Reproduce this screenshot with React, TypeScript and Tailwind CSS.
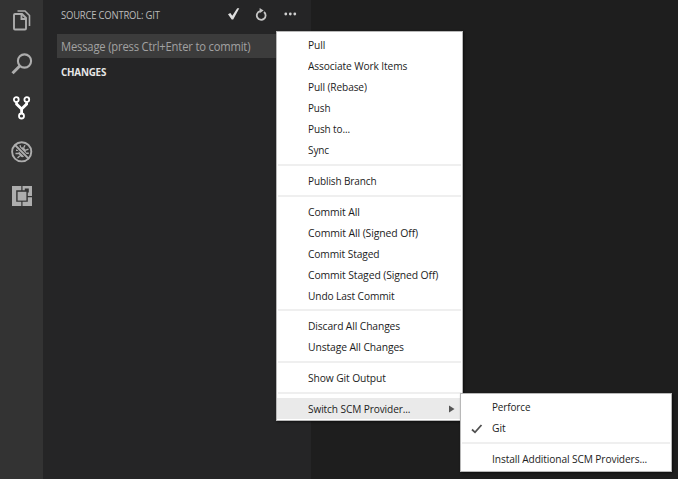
import type { ReactNode } from "react";

type ItemProps = { label: string; fit: string; active?: boolean; checked?: boolean; sub?: boolean };

function Item({ label, fit, active, checked, sub }: ItemProps) {
  return (
    <div className={`flex h-[21px] shrink-0 items-center whitespace-nowrap ${active ? "bg-[#eaeaea]" : ""}`}>
      <span className="flex w-[31px] shrink-0 items-center pl-[10px]">
        {checked && (
          <svg width="12" height="10" viewBox="0 0 12 10" fill="none" stroke="#505050" strokeWidth="1.8">
            <path d="M1 5.5 4 8.3 10.5 1" />
          </svg>
        )}
      </span>
      <span className={`origin-left tracking-[-0.12px] text-[#1c1c1c] ${active ? "mt-[1px]" : "-mt-[1px]"} ${fit}`}>{label}</span>
      {sub && (
        <svg className="mr-[7px] ml-auto" width="6" height="8" viewBox="0 0 6 8">
          <path d="M0 0.5v7L5.5 4z" fill="#555" />
        </svg>
      )}
    </div>
  );
}

function Separator({ size = "h-[10px] pt-[3px]" }: { size?: string }) {
  return (
    <div className={`shrink-0 px-[1px] ${size}`}>
      <div className="h-[1.5px] bg-[#efefef]" />
    </div>
  );
}

function Menu({ className, children }: { className: string; children: ReactNode }) {
  return (
    <div className={`absolute flex flex-col border border-[#b8b8b8] bg-white text-[11px] shadow-[1px_1px_2px_#0008] ${className}`}>{children}</div>
  );
}

export default function App() {
  return (
    <div className="relative flex h-[479px] w-[678px] overflow-hidden bg-[#1e1e1e] font-['Open_Sans','Noto_Sans',sans-serif]">
      <nav className="flex w-[43px] shrink-0 flex-col items-center bg-[#333333]">
        <div className="flex h-[42px] w-full items-center pl-[12px]">
          <svg width="19" height="22" viewBox="0 0 19 22" fill="none" stroke="#adadad" strokeWidth="1.9">
            <path d="M3 4h7l4 4v10.5c0 .7-.3 1-1 1H3c-.7 0-1-.3-1-1V5c0-.7.3-1 1-1Z" />
            <path d="M9.5 4v5H14" />
            <path d="M5.5 1H13l4.5 4.5V16" strokeWidth="1.6" />
          </svg>
        </div>
        <div className="flex h-[44px] w-full items-center pl-[11px]">
          <svg width="22" height="22" viewBox="0 0 22 22" fill="none" stroke="#adadad">
            <circle cx="13.5" cy="8" r="6.6" strokeWidth="2.1" />
            <path d="m9 12.7-7.5 7.5" strokeWidth="3" />
          </svg>
        </div>
        <div className="flex h-[44px] w-full items-center pl-[13px]">
          <svg width="18" height="24" viewBox="0 0 18 24" fill="none" stroke="#fff">
            <circle cx="3.3" cy="3.6" r="2.4" strokeWidth="1.8" />
            <circle cx="13.8" cy="3.6" r="2.4" strokeWidth="1.8" />
            <circle cx="8.5" cy="20" r="2.5" strokeWidth="1.8" />
            <path d="M3.6 6.3v1.8l5 5 5-5V6.3M8.6 12.5v5" strokeWidth="2.8" />
          </svg>
        </div>
        <div className="flex h-[44px] w-full items-center pl-[11px]">
          <svg width="22" height="22" viewBox="0 0 22 22" fill="none" stroke="#adadad">
            <path d="M5 9.2h3M4.5 12.5h4M6.5 17l2.2-2M14 4.3l-1.3 2.5M9 4.2l.8 2.7M17.5 8.2l-3.3 1.2M17.8 12.2h-3.2" strokeWidth="1.4" />
            <ellipse cx="11.3" cy="11.3" rx="3.6" ry="5" fill="#adadad" stroke="none" />
            <path d="m4 4 14 14" stroke="#333" strokeWidth="3.6" />
            <path d="m4 4 14 14" strokeWidth="1.8" />
            <circle cx="10.7" cy="10.8" r="9.6" strokeWidth="1.9" />
          </svg>
        </div>
        <div className="flex h-[44px] w-full items-center pl-[12px]">
          <svg width="20" height="20" viewBox="0 0 20 20">
            <path d="M0 0h20v20H0z" fill="#adadad" />
            <path d="M4.2 4.2h11.6v11.6H4.2zM9.3 0h1.2v5H9.3zM15 10h5v1.2h-5zM9.3 15h1.2v5H9.3zM12.8 2.6h4v4h-4z" fill="#333" />
            <path d="M5.6 5.8h8.8v8.8H5.6z" fill="#adadad" />
          </svg>
        </div>
      </nav>

      <aside className="flex w-[268px] shrink-0 flex-col bg-[#252526]">
        <header className="flex h-[30px] items-center pl-[18px]">
          <span className="w-[99px] origin-left scale-x-[0.945] text-[10px] tracking-[-0.2px] whitespace-nowrap text-[#bbbbbb]">SOURCE CONTROL: GIT</span>
          <svg className="-mt-[2px] ml-[68px]" width="12" height="12" viewBox="0 0 12 12" fill="#ddd">
            <path d="M0 6.3 2.3 5l2 2.7L9.2.3h2.1L5.2 11.5H3.7z" />
          </svg>
          <svg className="-mt-[1px] ml-[15px]" width="13" height="13" viewBox="0 0 13 13" fill="none" stroke="#c5c5c5">
            <path d="M9 4A4.4 4.4 0 1 1 4.9 3.2" strokeWidth="1.8" />
            <path d="M4.6 0v5.2L8.6 2.6z" fill="#c5c5c5" stroke="none" />
          </svg>
          <svg className="-mt-[3px] ml-[16px]" width="13" height="4" viewBox="0 0 13 4" fill="#d0d0d0">
            <circle cx="1.8" cy="2" r="1.4" />
            <circle cx="6.3" cy="2" r="1.4" />
            <circle cx="10.8" cy="2" r="1.4" />
          </svg>
        </header>
        <div className="mt-[4px] ml-[14px] flex h-[24px] items-center bg-[#3c3c3c] pt-[1px] pl-[4px]">
          <span className="origin-left scale-x-[0.936] text-[12px] tracking-[-0.2px] whitespace-nowrap text-[#a2a2a2]">Message (press Ctrl+Enter to commit)</span>
        </div>
        <div className="mt-[4px] flex h-[20px] items-center pl-[18px]">
          <span className="origin-left scale-x-[0.98] text-[10px] font-bold tracking-[-0.2px] text-[#e7e7e7]">CHANGES</span>
        </div>
      </aside>

      <Menu className="top-[31px] left-[276px] h-[390px] w-[187px] pt-[3px]">
        <Item label="Pull" fit="scale-x-[0.93]" />
        <Item label="Associate Work Items" fit="scale-x-[0.925]" />
        <Item label="Pull (Rebase)" fit="scale-x-[0.92]" />
        <Item label="Push" fit="scale-x-[0.9]" />
        <Item label="Push to..." fit="scale-x-[0.91]" />
        <Item label="Sync" fit="scale-x-[0.91]" />
        <Separator />
        <Item label="Publish Branch" fit="scale-x-[0.91]" />
        <Separator />
        <Item label="Commit All" fit="scale-x-[0.945]" />
        <Item label="Commit All (Signed Off)" fit="scale-x-[0.95]" />
        <Item label="Commit Staged" fit="scale-x-[0.93]" />
        <Item label="Commit Staged (Signed Off)" fit="scale-x-[0.945]" />
        <Item label="Undo Last Commit" fit="scale-x-[0.925]" />
        <Separator size="h-[9px] pt-[2px]" />
        <Item label="Discard All Changes" fit="scale-x-[0.935]" />
        <Item label="Unstage All Changes" fit="scale-x-[0.94]" />
        <Separator />
        <Item label="Show Git Output" fit="scale-x-[0.935]" />
        <Separator size="h-[9px] pt-[3px]" />
        <Item label="Switch SCM Provider..." fit="scale-x-[0.92]" active sub />
      </Menu>

      <Menu className="top-[393px] left-[460px] h-[79px] w-[212px] pt-[3px]">
        <Item label="Perforce" fit="scale-x-[0.9]" />
        <Item label="Git" fit="scale-x-[0.94]" checked />
        <Separator />
        <Item label="Install Additional SCM Providers..." fit="scale-x-[0.927]" />
      </Menu>
    </div>
  );
}
